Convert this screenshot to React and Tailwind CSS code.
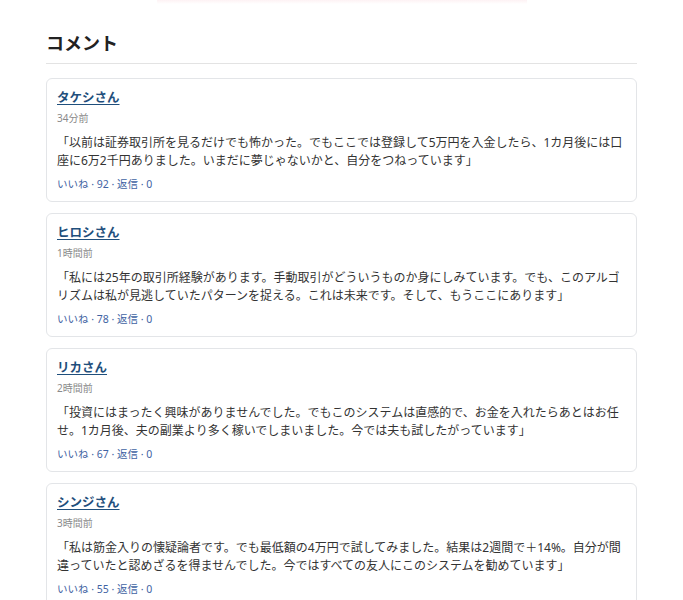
const COMMENTS = [
  {
    name: "タケシさん",
    time: "34分前",
    body: "「以前は証券取引所を見るだけでも怖かった。でもここでは登録して5万円を入金したら、1カ月後には口座に6万2千円ありました。いまだに夢じゃないかと、自分をつねっています」",
    likes: 92,
  },
  {
    name: "ヒロシさん",
    time: "1時間前",
    body: "「私には25年の取引所経験があります。手動取引がどういうものか身にしみています。でも、このアルゴリズムは私が見逃していたパターンを捉える。これは未来です。そして、もうここにあります」",
    likes: 78,
  },
  {
    name: "リカさん",
    time: "2時間前",
    body: "「投資にはまったく興味がありませんでした。でもこのシステムは直感的で、お金を入れたらあとはお任せ。1カ月後、夫の副業より多く稼いでしまいました。今では夫も試したがっています」",
    likes: 67,
  },
  {
    name: "シンジさん",
    time: "3時間前",
    body: "「私は筋金入りの懐疑論者です。でも最低額の4万円で試してみました。結果は2週間で＋14%。自分が間違っていたと認めざるを得ませんでした。今ではすべての友人にこのシステムを勧めています」",
    likes: 55,
  },
];

function Comment({ c }) {
  return (
    <div className="rounded-md border border-[#e3e5e8] bg-white px-[10px] pt-[10px] pb-[10px]">
      <a href="#" className="block text-[12.5px] leading-[18px] font-bold text-[#1f4f7c] underline underline-offset-2">
        {c.name}
      </a>
      <div className="mt-[4px] text-[10px] leading-[14px] text-[#8a8a8a]">{c.time}</div>
      <p className="mt-[9px] text-[12px] leading-[18px] text-[#333]">{c.body}</p>
      <div className="mt-[7px] text-[10.5px] leading-[14px] text-[#3f63a3]">
        いいね · {c.likes} · 返信 · 0
      </div>
    </div>
  );
}

export default function App() {
  return (
    <div
      className="min-h-[600px] bg-white"
      style={{ fontFamily: '"Noto Sans", "Noto Sans CJK JP", sans-serif' }}
    >
      <div className="mx-auto h-[4px] w-[370px] bg-gradient-to-b from-[#fdf2f4] to-white" />
      <div className="px-[46px]">
        <h2 className="mt-[26px] border-b border-[#e3e3e3] pb-[6px] text-[18px] leading-[27px] font-bold text-[#222]">
          コメント
        </h2>
        <div className="mt-[14px] flex flex-col gap-[11px]">
          {COMMENTS.map((c) => (
            <Comment key={c.name} c={c} />
          ))}
        </div>
      </div>
    </div>
  );
}
